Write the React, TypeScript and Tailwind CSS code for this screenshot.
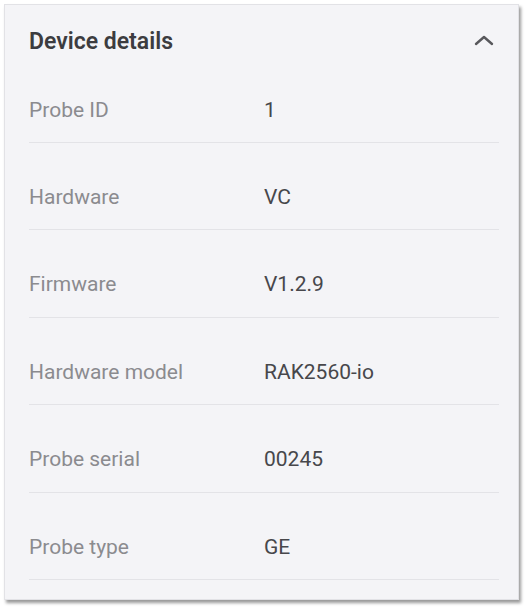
import React from "react";

const rows: [string, string][] = [
  ["Probe ID", "1"],
  ["Hardware", "VC"],
  ["Firmware", "V1.2.9"],
  ["Hardware model", "RAK2560-io"],
  ["Probe serial", "00245"],
  ["Probe type", "GE"],
];

export default function App() {
  return (
    <div className="w-[528px] h-[609px] bg-white pt-[4px] pl-[4px]" style={{ fontFamily: "Roboto, 'Noto Sans', sans-serif" }}>
      <div className="w-[515px] h-[596px] bg-[#f4f4f7] border border-[#e2e2e6] shadow-[2px_3px_3px_rgba(0,0,0,0.4)] pl-[24px] pr-[19px] pb-[20px]">
        <div className="h-[50.6px] pt-[24px] flex items-center justify-between">
          <span className="text-[23px] leading-[26px] font-semibold text-[#3c3c40]">Device details</span>
          <svg width="24" height="14" viewBox="0 0 24 14" className="mr-[3px] mb-[4px]">
            <path d="M4 11 L12 4 L20 11" fill="none" stroke="#58585c" strokeWidth="2.4" strokeLinecap="round" strokeLinejoin="round" />
          </svg>
        </div>
        {rows.map(([k, v]) => (
          <div key={k} className="h-[87.4px] pt-[21.6px] flex items-center border-b border-[#e3e3e7] text-[21px] leading-[24px]">
            <span className="w-[235px] text-[#8b8b8f]">{k}</span>
            <span className="text-[#47474b]">{v}</span>
          </div>
        ))}
      </div>
    </div>
  );
}
